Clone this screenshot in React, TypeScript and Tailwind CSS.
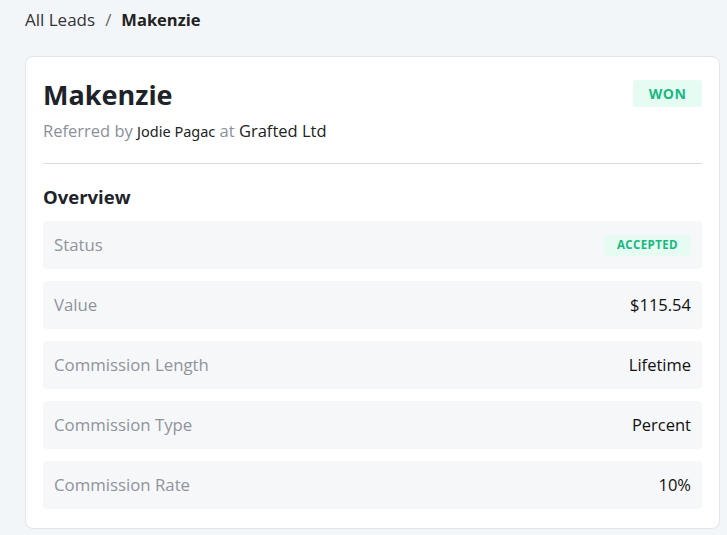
const rows = [
  { label: 'Status', value: 'ACCEPTED', badge: true },
  { label: 'Value', value: '$115.54' },
  { label: 'Commission Length', value: 'Lifetime' },
  { label: 'Commission Type', value: 'Percent' },
  { label: 'Commission Rate', value: '10%' },
];

export default function App() {
  return (
    <div className="min-h-[535px] bg-[#f3f6f9] pl-[25px] pt-[8px] font-['Open_Sans',sans-serif] text-[#1f2328]">
      {/* breadcrumb */}
      <div className="flex items-center gap-[10px] text-[17px] leading-[24px]">
        <span className="text-[#333]">All Leads</span>
        <span className="text-[#666]">/</span>
        <span className="text-[16.5px] font-bold text-[#222]">Makenzie</span>
      </div>

      <div className="mt-[24px] w-[695px] rounded-lg border border-[#e2e6ea] bg-white px-[17px] pb-[19px] pt-[18px]">
        <div className="flex items-start justify-between">
          <div>
            <h1 className="text-[27px] font-bold leading-[40px] text-[#1e2329]">Makenzie</h1>
            <p className="mt-[5px] text-[16.5px] leading-[22px] text-[#8a9099]">
              Referred by <span className="font-['Noto_Sans',sans-serif] text-[14.5px] text-[#222]">Jodie Pagac</span> at{' '}
              <span className="text-[#222]">Grafted Ltd</span>
            </p>
          </div>
          <span className="mt-[5px] flex h-[27px] w-[69px] items-center justify-center rounded-[3px] bg-[#e6fbf2] text-[14px] font-bold tracking-[0.5px] text-[#18b981]">
            WON
          </span>
        </div>

        <div className="mt-[21px] h-px bg-[#d9dcdf]" />

        <h2 className="mt-[21px] text-[18.5px] font-bold leading-[24px] text-[#1e2329]">Overview</h2>

        <div className="mt-[12px] flex flex-col gap-[12px]">
          {rows.map((r) => (
            <div key={r.label} className="flex h-[48px] items-center justify-between rounded-[4px] bg-[#f6f7f9] px-[11px]">
              <span className="text-[16.8px] text-[#8f949b]">{r.label}</span>
              {r.badge ? (
                <span className="flex h-[21px] items-center rounded-[4px] bg-[#e6fbf2] px-[13px] text-[11.5px] font-bold tracking-[0.4px] text-[#18b981]">
                  {r.value}
                </span>
              ) : (
                <span className="text-[16.5px] text-[#111]">{r.value}</span>
              )}
            </div>
          ))}
        </div>
      </div>
    </div>
  );
}
